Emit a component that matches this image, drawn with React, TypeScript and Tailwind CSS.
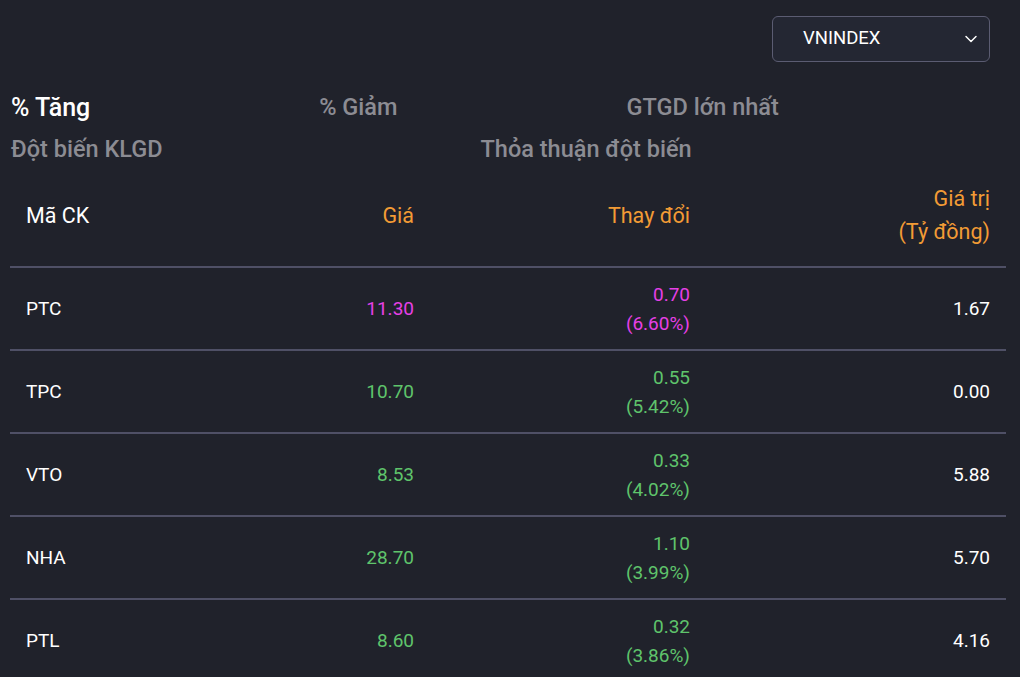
import React, { useState } from "react";
import { FiChevronDown } from "react-icons/fi";

type Row = {
  code: string;
  price: string;
  change: string;
  pct: string;
  value: string;
  tone: "ceil" | "up";
};

const rows: Row[] = [
  { code: "PTC", price: "11.30", change: "0.70", pct: "(6.60%)", value: "1.67", tone: "ceil" },
  { code: "TPC", price: "10.70", change: "0.55", pct: "(5.42%)", value: "0.00", tone: "up" },
  { code: "VTO", price: "8.53", change: "0.33", pct: "(4.02%)", value: "5.88", tone: "up" },
  { code: "NHA", price: "28.70", change: "1.10", pct: "(3.99%)", value: "5.70", tone: "up" },
  { code: "PTL", price: "8.60", change: "0.32", pct: "(3.86%)", value: "4.16", tone: "up" },
];

const toneClass = {
  ceil: "text-[#e640e6]",
  up: "text-[#5fc46b]",
};

export default function App() {
  const [tab, setTab] = useState("tang");

  const tabClass = (key: string) =>
    key === tab ? "text-white text-[25px]" : "text-[#8c8c93]";

  return (
    <div className="w-[1020px] h-[677px] overflow-hidden bg-[#20222b] font-['Roboto',sans-serif]">
      <div className="flex justify-end pt-4 pr-[30px]">
        <button className="flex items-center justify-between w-[218px] h-[46px] pl-[30px] pr-[8px] rounded-md border border-[#5b5c72] bg-[#242733] text-[18.5px] text-white">
          VNINDEX
          <FiChevronDown size={20} strokeWidth={1.75} />
        </button>
      </div>

      <div className="mt-[25px] px-[11px] text-[23.5px] font-medium">
        <div className="flex h-[42px] items-center gap-[229px]">
          <button className={tabClass("tang")} onClick={() => setTab("tang")}>
            % Tăng
          </button>
          <button className={tabClass("giam")} onClick={() => setTab("giam")}>
            % Giảm
          </button>
          <button className={tabClass("gtgd")} onClick={() => setTab("gtgd")}>
            GTGD lớn nhất
          </button>
        </div>
        <div className="flex h-[42px] items-center gap-[318px]">
          <button className={tabClass("klgd")} onClick={() => setTab("klgd")}>
            Đột biến KLGD
          </button>
          <button className={tabClass("tt")} onClick={() => setTab("tt")}>
            Thỏa thuận đột biến
          </button>
        </div>
      </div>

      <div className="mx-[10px] w-[996px]">
        <div className="grid grid-cols-[210px_210px_276px_300px] items-center pt-[11px] pb-[18px] border-b-2 border-[#4f5066] text-[21.5px] leading-[33px]">
          <div className="pl-4 text-white">Mã CK</div>
          <div className="pr-4 text-right text-[#f29b35]">Giá</div>
          <div className="pr-4 text-right text-[#f29b35]">Thay đổi</div>
          <div className="pr-4 text-right text-[#f29b35]">
            Giá trị
            <br />
            (Tỷ đồng)
          </div>
        </div>

        {rows.map((r) => (
          <div
            key={r.code}
            className="grid grid-cols-[210px_210px_276px_300px] items-center h-[83px] border-b-2 border-[#4f5066] text-[19px] leading-[29px]"
          >
            <div className="pl-4 text-white">{r.code}</div>
            <div className={`pr-4 text-right ${toneClass[r.tone]}`}>{r.price}</div>
            <div className={`pr-4 text-right ${toneClass[r.tone]}`}>
              {r.change}
              <br />
              {r.pct}
            </div>
            <div className="pr-4 text-right text-white">{r.value}</div>
          </div>
        ))}
      </div>
    </div>
  );
}
